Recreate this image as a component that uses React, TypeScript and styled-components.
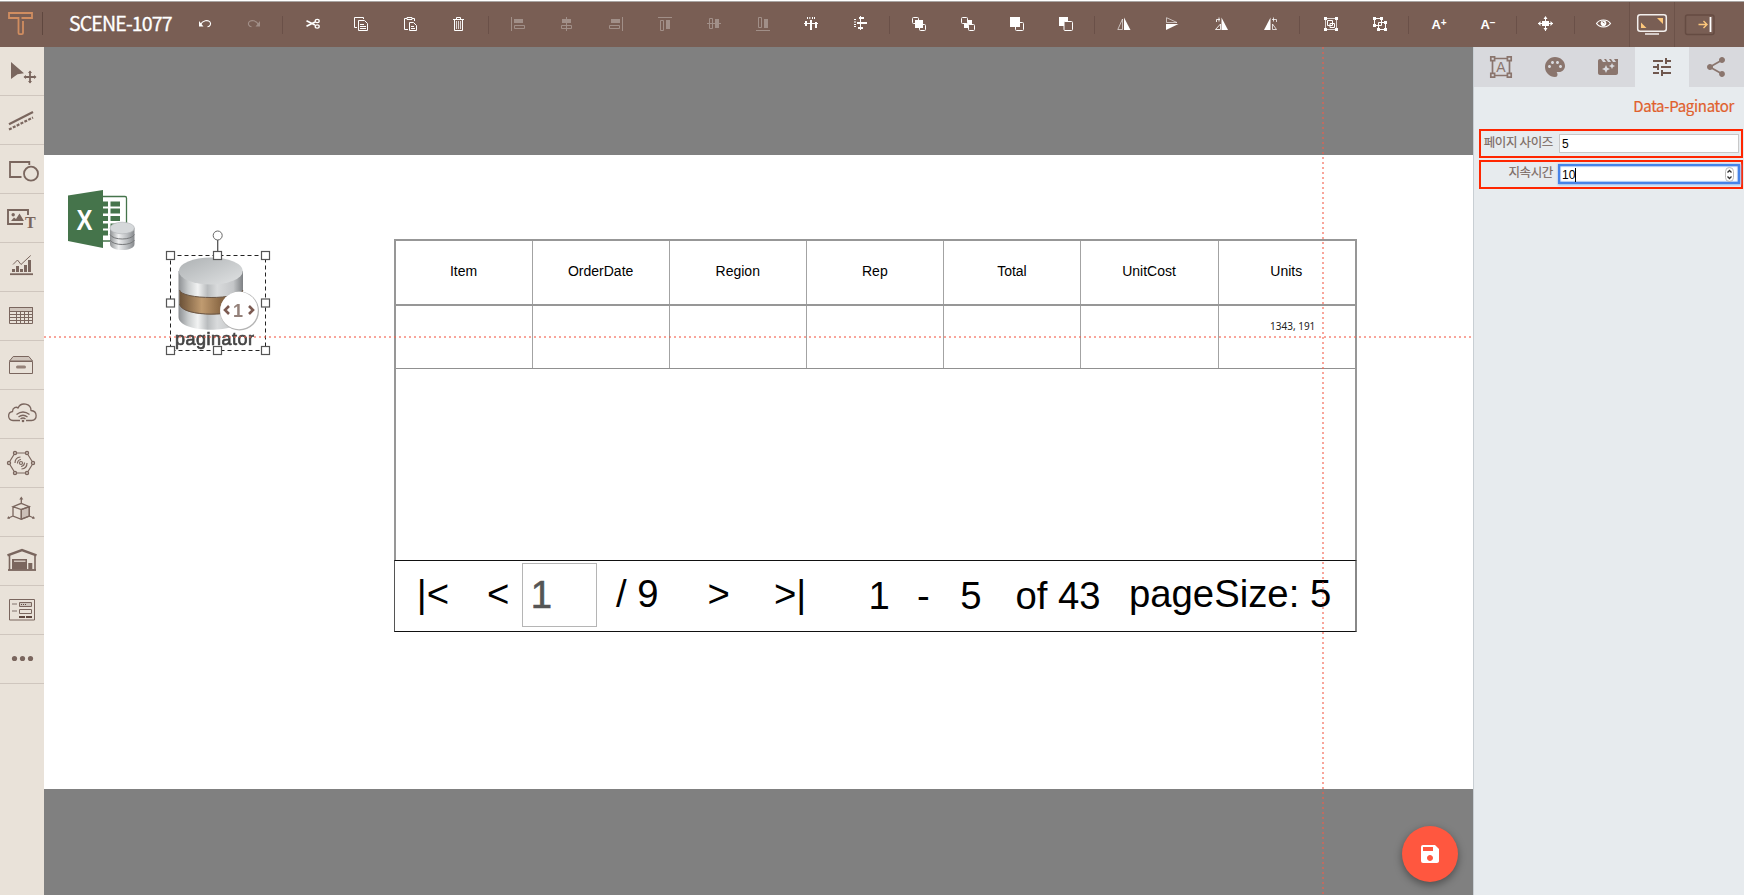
import React from "react";
import styled, { createGlobalStyle } from "styled-components";
import { MdPalette, MdMovieFilter, MdTune, MdShare, MdSave } from "react-icons/md";

const GlobalStyle = createGlobalStyle`
  * { box-sizing: border-box; }
  html, body { margin: 0; overflow: hidden; }
  body { font-family: "Liberation Sans", Arial, sans-serif; background: #fff; }
`;

const korean = `"Noto Sans CJK KR", "Noto Sans", sans-serif`;
const brown = "#7a665e";

const Page = styled.div`
  display: flex;
  flex-direction: column;
  width: 1744px;
  height: 895px;
  overflow: hidden;
`;

/* ---------- top toolbar ---------- */

const Toolbar = styled.header`
  flex: none;
  display: flex;
  align-items: center;
  height: 46px;
  margin-top: 1px;
  border-top: 1px solid #a9a5a3;
  background: #795e54;
`;
const Logo = styled.div`
  width: 42px;
  height: 45px;
  display: flex;
  align-items: center;
`;
const Divider = styled.i<{ $w?: number }>`
  flex: none;
  width: ${(p) => p.$w ?? 9}px;
  height: 18px;
  background: linear-gradient(#6a5048, #6a5048) 3.5px 0 / 1px 100% no-repeat;
`;
const LogoRule = styled.i`
  width: 1px;
  height: 23px;
  margin-top: -2px;
  background: #5f473f;
`;
const SceneTitle = styled.h1`
  margin: -3px 0 0;
  padding-left: 26px;
  width: 137.5px;
  font: 400 19.5px/44px ${korean};
  letter-spacing: -0.85px;
  white-space: nowrap;
  color: #fff;
  -webkit-text-stroke: 0.3px #fff;
`;
const ToolButton = styled.div<{ $dim?: boolean }>`
  flex: none;
  display: flex;
  justify-content: center;
  width: 49px;
  color: #fff;
  opacity: ${(p) => (p.$dim ? 0.3 : 1)};
  svg { display: block; margin-top: -1px; }
`;
const ScreenButton = styled.div<{ $w: number }>`
  flex: none;
  display: flex;
  align-items: center;
  justify-content: center;
  width: ${(p) => p.$w}px;
  height: 45px;
  border-left: 1px solid #6c5249;
  svg { display: block; }
`;

const Ico = ({ children }: { children: React.ReactNode }) => (
  <svg width="16" height="16" viewBox="0 0 16 16" fill="none" stroke="currentColor" strokeWidth="1">
    {children}
  </svg>
);

const fillOnly = { fill: "currentColor", stroke: "none" };

const icons: Record<string, React.ReactNode> = {
  undo: <><path d="M3.500 8.500C5.500 4.500 11 3.500 13 6c1.300 2 .2 4.500-2.500 4.800" strokeWidth="1.100" /><path d="M2 5v5.500h4.500z" {...fillOnly} /></>,
  redo: <><path d="M12.500 8.500C10.500 4.500 5 3.500 3 6c-1.300 2-.2 4.500 2.500 4.800" strokeWidth="1.100" /><path d="M14 5v5.500H9.500z" {...fillOnly} /></>,
  cut: <><path d="M1.500 4.700 10 9M1.500 10.300 10 6" strokeWidth="1.700" /><ellipse cx="12.200" cy="5" rx="2" ry="1.600" strokeWidth="1.300" /><ellipse cx="12.200" cy="10.500" rx="2" ry="1.600" strokeWidth="1.300" /></>,
  copy: <><path d="M3 11.500H.5v-10h9V3M4.500 4.500h6l3 3v7h-9zM6 8.500h4M6 10.500h6M6 12.500h6" /></>,
  paste: <><path d="M5 13.500H1.500v-11H4M9 2.500h2.500V5M4 1.500h5v2H4zM6.500 6.500h4l3 3v5h-7zM8 10.500h3M8 12.500h4" /></>,
  trash: <><path d="M1 3.500h11M4.500 3V1.500h4V3M2.500 4v10.500h8V4" /><path d="M4.500 5v8M6.500 5v8M8.500 5v8" opacity=".75" /></>,
  alignL: <><path d="M1.500 1v14M4.500 9.500h10v3h-10z" /><path d="M4 3h9v4H4z" {...fillOnly} /></>,
  alignC: <><path d="M7.500 1v14M2.500 9.500h10v3h-10z" /><path d="M3 3h9v4H3z" {...fillOnly} /></>,
  alignR: <><path d="M14.500 1v14M1.500 9.500h10v3h-10z" /><path d="M3 3h9v4H3z" {...fillOnly} /></>,
  alignT: <><path d="M1 1.500h14M3.500 4.500h3v10h-3z" /><path d="M9 4h4v9H9z" {...fillOnly} /></>,
  alignM: <><path d="M1 7.500h14M3.500 2.500h3v10h-3z" /><path d="M9 3h4v9H9z" {...fillOnly} /></>,
  alignB: <><path d="M1 14.500h14M3.500 1.500h3v10h-3z" /><path d="M9 3h4v9H9z" {...fillOnly} /></>,
  distH: <><path d="M0 7.500h14" /><path d="M3 1h1v2H3zM5.300 1h1v2h-1zM8 1h1v2H8zM10 1h1v2h-1zM1 5h2v5H1zM6 4h2v10H6zM11 6h2v6h-2z" {...fillOnly} /></>,
  distV: <><path d="M7.500 0v14" /><path d="M1 3h2v1H1zM1 5.500h2v1H1zM1 8h2v1H1zM1 10h2v1H1zM6 1h5v2H6zM4 6h10v2H4zM5 11h5v2H5z" {...fillOnly} /></>,
  front: <><rect x="1.500" y="1.500" width="6" height="6" rx="1" /><rect x="8.500" y="8.500" width="6" height="6" rx="1" /><path d="M4 4h8v8H4z" {...fillOnly} /></>,
  forward: <><path d="M4 4h8v8H4z" {...fillOnly} /><rect x="1.500" y="1.500" width="6" height="6" rx="1" fill="#795e54" /><rect x="8.500" y="8.500" width="6" height="6" rx="1" fill="#795e54" /></>,
  toTop: <><rect x="6.500" y="6.500" width="8" height="8" rx="1" /><path d="M1 1h10v10H1z" {...fillOnly} /></>,
  toBack: <><path d="M1 1h9v9H1z" {...fillOnly} /><rect x="6" y="5.500" width="8.500" height="9" rx="1" fill="#795e54" /></>,
  flipH: <><path d="M1.800 13.500 6.500 3v10.500z" opacity=".6" /><path d="M8 1.500 14.500 14H8z" {...fillOnly} /></>,
  flipV: <><path d="M1.500 1.700 12 6.500H1.500z" opacity=".6" /><path d="M1 8h12.500L1 14z" {...fillOnly} /></>,
  rotL: <><path d="M1.500 13.500 6.500 8v5.500zM2.500 6V3.500H6M5 1.500v4" opacity=".85" /><path d="M7.500 1.500 14 14H7.500z" {...fillOnly} /></>,
  rotR: <><path d="M13.500 13.500 9.500 8v5.500zM13.500 6V3.500H9M10.500 1.500v4" opacity=".75" /><path d="M7.500 1.500 1 14h6.500z" {...fillOnly} /></>,
  group: <><path d="M3 2.500h10M2.500 3v10M3 13.500h10M13.500 3v10" strokeDasharray="7 0" opacity=".75" /><path d="M4.500 4.500h5v5h-5zM7 7.500h4.500v4H7z" /><path d="M1 1h3v3H1zM12 1h3v3h-3zM1 12h3v3H1zM12 12h3v3h-3z" {...fillOnly} /></>,
  ungroup: <><path d="M2.500 2.500h7v7h-7zM6.500 6.500h7v7h-7z" /><path d="M1 1h3v3H1zM8 1h3v3H8zM1 8h3v3H1zM5 12h3v3H5zM12 5h3v3h-3zM12 12h3v3h-3z" {...fillOnly} /></>,
  center: <><path d="M7.500 1v14M0 7.500h15" /><path d="M4 5h7v5H4zM7.500 0 9.500 3h-4zM7.500 15l2-3h-4zM0 7.500 2.500 5v5zM15 7.500 12.500 5v5z" {...fillOnly} /></>,
};

const EyeIcon = () => (
  <Ico>
    <path d="M.5 7.500C3.500 2.800 11.500 2.800 14.500 7.500 11.500 12 3.500 12 .5 7.500z" strokeWidth="1.200" />
    <circle cx="7.500" cy="7.300" r="2.800" {...fillOnly} />
    <path d="M6.500 5.700l2 1.300" stroke="#795e54" />
  </Ico>
);
const FontSize = styled.span`
  display: flex;
  align-items: flex-start;
  font: 700 13px/16px "Liberation Sans", sans-serif;
  sup { font-size: 10px; line-height: 11px; }
`;

const Tool = ({ name, dim }: { name: string; dim?: boolean }) => (
  <ToolButton $dim={dim}><Ico>{icons[name]}</Ico></ToolButton>
);
const Tools = ({ names, dim }: { names: string[]; dim?: boolean }) => (
  <>{names.map((n) => <Tool key={n} name={n} dim={dim} />)}</>
);

const TopBar = () => (
  <Toolbar>
    <Logo>
      <svg width="42" height="45" viewBox="0 2 42 45" fill="none" stroke="#d08d60" strokeWidth="1.800">
        <path d="M23 21v12q0 1.200-1.200 1.200h-2.100q-1.200 0-1.200-1.200V18H9v-5h23v5H21.500" />
      </svg>
    </Logo>
    <LogoRule />
    <SceneTitle>SCENE-1077</SceneTitle>
    <Tool name="undo" />
    <Tool name="redo" dim />
    <Divider $w={10} />
    <Tools names={["cut", "copy", "paste", "trash"]} />
    <Divider />
    <Tools names={["alignL", "alignC", "alignR", "alignT", "alignM", "alignB"]} dim />
    <Tools names={["distH", "distV"]} />
    <Divider />
    <Tools names={["front", "forward", "toTop", "toBack"]} />
    <Divider />
    <Tools names={["flipH", "flipV", "rotL", "rotR"]} />
    <Divider $w={11} />
    <Tools names={["group", "ungroup"]} />
    <Divider $w={10} />
    <ToolButton><FontSize>A<sup>+</sup></FontSize></ToolButton>
    <ToolButton><FontSize>A<sup>−</sup></FontSize></ToolButton>
    <Divider />
    <Tool name="center" />
    <Divider $w={9} />
    <ToolButton><EyeIcon /></ToolButton>
    <ScreenButton $w={45}>
      <svg width="32" height="24" viewBox="0 0 32 24">
        <rect x="1.700" y="1.700" width="28.600" height="16.600" rx="2.500" fill="none" stroke="#f3efed" strokeWidth="1.500" />
        <path d="M9 21h14" stroke="#f3efed" strokeWidth="1.500" />
        <path d="M5 9.500v5.500h5.500zM27 11V5h-6z" fill="#fdc77b" />
      </svg>
    </ScreenButton>
    <ScreenButton $w={52}>
      <svg width="32" height="24" viewBox="0 0 32 24" fill="none">
        <rect x="1.500" y="2" width="28.500" height="19.500" rx="2" stroke="#654b42" strokeWidth="1.500" />
        <path d="M14.500 11.500h8.500M19.500 8l3.500 3.500-3.500 3.500" stroke="#fdc77b" strokeWidth="1.400" />
        <path d="M26.500 4v15" stroke="#fff" strokeWidth="1.800" />
      </svg>
    </ScreenButton>
  </Toolbar>
);

/* ---------- left rail ---------- */

const Body = styled.div`
  flex: 1;
  display: flex;
  min-height: 0;
`;
const Rail = styled.nav`
  flex: none;
  width: 44px;
  background: #e9e2d9;
`;
const RailItem = styled.div`
  height: 49px;
  border-bottom: 1px solid #cfc6be;
  svg { display: block; }
`;

const f = { fill: brown, stroke: "none" };
const railIcons: React.ReactNode[] = [
  <><path d="M11 15l13 11.300-6.500 1L11 32z" {...f} /><path d="M30 24.500v11M24.500 30h11" strokeWidth="1.800" /><path d="M30 23.500l2 2.500h-4zM30 36.500l2-2.500h-4zM23.500 30l2.500-2v4zM36.500 30L34 28v4z" {...f} /></>,
  <><path d="M9 28.300L33 16" strokeWidth="2.200" /><path d="M9 33.500L33 21.500" strokeWidth="2.200" strokeDasharray="3 1.300" /></>,
  <><path d="M29.300 20v-3H10v15h11.500" strokeWidth="1.800" /><circle cx="31" cy="28.700" r="7" strokeWidth="1.800" /></>,
  <><path d="M28 21v-5H8v14h15" strokeWidth="1.900" /><circle cx="13.200" cy="20.700" r="1.700" {...f} /><path d="M11 27l3-3.500 2 1.500 3.500-5.500L24 27z" {...f} /><text x="25" y="34" fontFamily="Liberation Serif, serif" fontWeight="700" fontSize="16" {...f}>T</text></>,
  <><path d="M10 31.200h23" strokeWidth="1.800" /><path d="M12 26h3v3h-3zM16 23h3v6h-3zM20 26h3v3h-3zM24 22h3v7h-3zM28 17h3v12h-3z" {...f} /><path d="M13 21.500l4.500-4.500 3.500 4.500 9.700-9" /></>,
  <><path d="M9.500 15.500h23v4h-23z" fill="#d0c5bc" /><path d="M9.500 15.500h23v16h-23zM16.500 19.500v12M20.500 19.500v12M24.500 19.500v12M28.500 19.500v12M9.500 22.500h23M9.500 25.500h23M9.500 28.500h23" /></>,
  <><path d="M9.500 20l3.700-4.500h15.600l3.700 4.500z" fill="#d0c5bc" /><path d="M9.500 20.500h23v12h-23z" /><rect x="16" y="24.500" width="10" height="3" rx="1.500" {...f} fill="#958279" /></>,
  <g strokeWidth="1.300"><path d="M20 30.500h-7c-5.500-.3-6-8-.5-9 0-4 4-5 5.500-3.500 3-6.500 13-4.500 13 2.500 6.500.5 7 9.500.5 10H26" /><path d="M16.500 24.500q6.500-5 13 0M18.500 27q4.500-3.500 9 0M20.500 29q2.500-2 5 0" /><circle cx="23" cy="31" r="1.300" {...f} /></g>,
  <g strokeWidth="1.200"><path d="M17 14h8M28 15.700l4 6.500M32 26l-4 6.500M25 34h-8M14 32.300l-4-6.500M10 22l4-6.500" />{[[15, 14], [27, 14], [33, 24], [27, 34], [15, 34], [9, 24]].map(([x, y]) => <circle key={`${x}${y}`} cx={x} cy={y} r="1.600" fill="#c9bdb4" />)}<circle cx="21" cy="24" r="1.500" /><path d="M17.500 24.500q0-3.500 3.500-4M15 24q0-5.500 5.500-6M24.500 23.500q0 3.500-3.500 4M27 24q0 5.500-5.500 6" /></g>,
  <g strokeWidth="1.300"><path d="M21.300 21.500v9.500l8-3V18.700z" fill="#cbbfb7" /><path d="M21.300 15.300l8 3.400-8 2.800-8.300-2.800zM13 18.700V28l8.300 3.300 8-3.300v-9.300M21.300 21.500v9.500M21.300 15V10M13 28l-4.500 2M29.300 28l4.500 2" /><path d="M19.300 11.500l2-3 2 3zM7 30.500l1.500-2.500 1.500 3zM35 30.500L33.500 28 32 31z" {...f} /></g>,
  <><path d="M7.500 18.300L22 13l14.500 5.300" strokeWidth="2.500" /><path d="M9.500 18v15M35 18v15" strokeWidth="1.600" /><path d="M8 33h28" strokeWidth="1.800" /><path d="M12 22h15v10.500H12zM28.300 26h4v6.500h-4z" {...f} /><path d="M14 23.500h11.500V25H14z" fill="#d0c5bc" stroke="none" /></>,
  <><path d="M9.500 13.500h25v20.500h-25z" /><path d="M12 17h5v2h-5zM12 24h5v2h-5z" {...f} fill="#b5aaa3" /><path d="M19.500 16.500h12v4h-12z" fill="#cfc6be" /><path d="M19.500 23.500h12v4h-12z" /><path d="M21 18h1v1h-1zM23 18h1v1h-1zM25 18h1v1h-1zM19 30h6v2h-6zM26 30h6v2h-6z" {...f} fill="#5f4840" /></>,
  <>{[14.5, 22.5, 30.5].map((x) => <circle key={x} cx={x} cy="23.500" r="2.600" {...f} />)}</>,
];

const LeftRail = () => (
  <Rail>
    {railIcons.map((icon, i) => (
      <RailItem key={i}>
        <svg width="44" height="48" viewBox="0 0 44 48" fill="none" stroke={brown}>{icon}</svg>
      </RailItem>
    ))}
  </Rail>
);

/* ---------- canvas ---------- */

const Stage = styled.main`
  position: relative;
  flex: none;
  width: 1429px;
  padding: 108px 0 106px;
  background: #808080;
`;
const Scene = styled.div`
  position: relative;
  height: 634px;
  background: #fff;
`;
const Placed = styled.div<{ $x: number; $y: number }>`
  position: absolute;
  left: ${(p) => p.$x}px;
  top: ${(p) => p.$y}px;
  svg { display: block; }
`;
const DataTable = styled.div`
  width: 963px;
  height: 322px;
  border: 2px solid #979797;
  border-bottom: none;
`;
const TableRow = styled.div<{ $head?: boolean }>`
  display: grid;
  grid-template-columns: repeat(6, 137.1px) 1fr;
  height: ${(p) => (p.$head ? 65 : 63)}px;
  border-bottom: ${(p) => (p.$head ? "2px solid #979797" : "1px solid #909090")};
`;
const Cell = styled.div`
  display: flex;
  align-items: center;
  justify-content: center;
  padding: 0 1px 3px 0;
  font-size: 14px;
  color: #000;
  border-right: 1px solid #a3a3a3;
  &:last-child { border-right: none; }
`;
const Pager = styled.div`
  display: flex;
  align-items: flex-start;
  width: 963px;
  height: 72px;
  border: 1px solid #111;
  border-left-color: #555;
  border-right: 2px solid #888;
  font-size: 38.3px;
  line-height: 44px;
  color: #000;
`;
const PagerText = styled.span<{ $gap: number; $low?: boolean }>`
  flex: none;
  white-space: pre;
  margin-left: ${(p) => p.$gap}px;
  margin-top: ${(p) => (p.$low ? 13 : 11)}px;
`;
const PageInput = styled.div`
  flex: none;
  width: 75px;
  height: 64px;
  margin: 2px 0 0 12.5px;
  padding: 9px 0 0 8px;
  border: 1px solid #b5b5b5;
  color: #555;
  -webkit-text-stroke: 0.6px #555;
`;
const CursorLabel = styled.span`
  display: block;
  font: 400 10px/14px "Noto Sans", sans-serif;
  color: #222;
`;
const GuideX = styled.i`
  position: absolute;
  left: 0;
  right: 2px;
  top: 289px;
  height: 2px;
  background: repeating-linear-gradient(90deg, rgba(244, 91, 71, 0.55) 0 2px, transparent 2px 5px);
`;
const GuideY = styled.i`
  position: absolute;
  top: 0;
  bottom: 0;
  left: 1278px;
  width: 2px;
  background: repeating-linear-gradient(180deg, rgba(244, 91, 71, 0.55) 0 2px, transparent 2px 5px);
`;
const SaveButton = styled.div`
  position: absolute;
  left: 1358px;
  top: 779px;
  display: flex;
  align-items: center;
  justify-content: center;
  width: 56px;
  height: 56px;
  border-radius: 50%;
  background: #ff573f;
  color: #fff;
  box-shadow: 0 3px 8px rgba(0, 0, 0, 0.4);
`;

const ExcelSource = () => (
  <svg width="70" height="64" viewBox="66 188 70 64">
    <defs>
      <linearGradient id="silver" x1="0" x2="1">
        <stop offset="0" stopColor="#8f9294" /><stop offset=".35" stopColor="#eff0f1" /><stop offset=".7" stopColor="#babdc0" /><stop offset="1" stopColor="#85888b" />
      </linearGradient>
    </defs>
    <rect x="98" y="196.500" width="28.500" height="44.500" rx="1.500" fill="#fff" stroke="#45744b" strokeWidth="1.300" />
    {[201.5, 208.5, 216, 223.5, 230.5].map((y) => (
      <g key={y} fill="#45744b"><rect x="102" y={y} width="6" height="5" /><rect x="110.500" y={y} width="9.500" height="5" /></g>
    ))}
    <path d="M68 195.500l35-5.500v58l-35-7z" fill="#45744b" />
    <text x="76.500" y="229.700" fontSize="30" fontWeight="700" fontFamily="Liberation Sans, sans-serif" fill="#fff" textLength="16" lengthAdjust="spacingAndGlyphs">X</text>
    <path d="M110 228v16c0 8 24.500 8 24.500 0v-16z" fill="url(#silver)" />
    <ellipse cx="122.200" cy="228" rx="12.200" ry="5.800" fill="#d5d8da" stroke="#b5b8ba" strokeWidth=".7" />
    <path d="M110 234.500c3 6 21.500 6 24.500 0M110 240c3 6 21.500 6 24.500 0" fill="none" stroke="#77797b" strokeWidth="1" />
  </svg>
);

const handles = [[170.5, 255.5], [217.5, 255.5], [265.5, 255.5], [170.5, 303], [265.5, 303], [170.5, 350.5], [217.5, 350.5], [265.5, 350.5]];

const Paginator = () => (
  <svg width="110" height="130" viewBox="162 228 110 130">
    <defs>
      <linearGradient id="steel" x1="0" x2="1">
        <stop offset="0" stopColor="#8d9093" /><stop offset=".15" stopColor="#c9cccd" /><stop offset=".3" stopColor="#f2f3f3" /><stop offset=".45" stopColor="#b9bcbe" /><stop offset=".6" stopColor="#d9dbdc" /><stop offset=".85" stopColor="#c4c6c8" /><stop offset="1" stopColor="#7d8083" />
      </linearGradient>
      <linearGradient id="bronze" x1="0" x2="1">
        <stop offset="0" stopColor="#6b5137" /><stop offset=".35" stopColor="#c09b70" /><stop offset=".65" stopColor="#8a6845" /><stop offset="1" stopColor="#745538" />
      </linearGradient>
      <linearGradient id="lid" x1="0" y1="0" x2="1" y2="1">
        <stop offset="0" stopColor="#adb1b3" /><stop offset="1" stopColor="#e0e2e3" />
      </linearGradient>
      <filter id="soft"><feGaussianBlur stdDeviation=".7" /></filter>
    </defs>
    <g filter="url(#soft)">
      <path d="M178.500 271v46c0 17 64.500 17 64.500 0v-46z" fill="url(#steel)" />
      <path d="M179.500 290c2 10 61 10 63.500 0v14c-2.500 14-61.500 14-63.500 0z" fill="url(#bronze)" />
      <path d="M179.500 290c2 10 61 10 63.500 0M179.500 304c2 13.500 61 13.500 63.500 0" fill="none" stroke="#695544" strokeWidth="1" />
      <ellipse cx="210.800" cy="271" rx="32" ry="13.500" fill="url(#lid)" />
      <circle cx="239.500" cy="311" r="19.500" fill="#b4b4b4" />
      <circle cx="239" cy="310.500" r="18.800" fill="#fff" />
      <path d="M229 306l-4 4 4 4M249 306l4 4-4 4" fill="none" stroke="#7b5a51" strokeWidth="2.600" />
      <text x="233" y="316.500" fontSize="18" fontWeight="700" fontFamily="Liberation Sans, sans-serif" fill="#94817a">1</text>
      <text x="175" y="345" fontSize="18" fontFamily="Liberation Sans, sans-serif" fill="#444" stroke="#444" strokeWidth=".7" textLength="79">paginator</text>
    </g>
    <rect x="170.500" y="255.500" width="95" height="95" fill="none" stroke="#222" strokeDasharray="4 3" />
    <path d="M217.700 240v11" stroke="#555" strokeWidth="1.300" />
    <circle cx="217.700" cy="235.500" r="4.500" fill="#fff" stroke="#666" />
    {handles.map(([x, y]) => (
      <rect key={`${x}-${y}`} x={x - 4} y={y - 4} width="8" height="8" fill="#fff" stroke="#555" strokeWidth="1.200" />
    ))}
  </svg>
);

const columns = ["Item", "OrderDate", "Region", "Rep", "Total", "UnitCost", "Units"];

const Canvas = () => (
  <Stage>
    <Scene>
      <Placed $x={22} $y={33}><ExcelSource /></Placed>
      <Placed $x={118} $y={73}><Paginator /></Placed>
      <Placed $x={350} $y={84}>
        <DataTable>
          <TableRow $head>{columns.map((c) => <Cell key={c}>{c}</Cell>)}</TableRow>
          <TableRow>{columns.map((c) => <Cell key={c} />)}</TableRow>
        </DataTable>
      </Placed>
      <Placed $x={350} $y={405}>
        <Pager>
          <PagerText $gap={21.8}>{"|<"}</PagerText>
          <PagerText $gap={37.8}>{"<"}</PagerText>
          <PageInput>1</PageInput>
          <PagerText $gap={19.3}>/ 9</PagerText>
          <PagerText $gap={48.9}>{">"}</PagerText>
          <PagerText $gap={44}>{">|"}</PagerText>
          <PagerText $gap={62.3} $low>1</PagerText>
          <PagerText $gap={27} $low>-</PagerText>
          <PagerText $gap={30.5} $low>5</PagerText>
          <PagerText $gap={34} $low>of 43</PagerText>
          <PagerText $gap={28.3}>pageSize: 5</PagerText>
        </Pager>
      </Placed>
      <Placed $x={1226} $y={164}><CursorLabel>1343, 191</CursorLabel></Placed>
    </Scene>
    <GuideX />
    <GuideY />
    <SaveButton><MdSave size={24} /></SaveButton>
  </Stage>
);

/* ---------- property panel ---------- */

const Panel = styled.aside`
  flex: 1;
  display: flex;
  flex-direction: column;
  border-left: 1px solid #c8ced3;
  background: #e7ebee;
`;
const Tabs = styled.div`
  display: flex;
  height: 40px;
  padding-right: 1px;
  background: #d8d9dd;
`;
const Tab = styled.div<{ $active?: boolean }>`
  flex: 1;
  display: flex;
  align-items: center;
  justify-content: center;
  background: ${(p) => (p.$active ? "#e7ebee" : "#d8d9dd")};
  color: ${(p) => (p.$active ? "#6f574e" : "#8a756d")};
`;
const PanelTitle = styled.h2`
  margin: 7px 10px 0 0;
  height: 35px;
  font: 400 15px/24px ${korean};
  letter-spacing: -0.3px;
  text-align: right;
  color: #e0602c;
  -webkit-text-stroke: 0.2px #e0602c;
`;
const Field = styled.div`
  display: flex;
  align-items: center;
  width: 264px;
  height: 29px;
  margin: 0 0 2px 5px;
  border: 2px solid #ff2600;
`;
const FieldLabel = styled.label<{ $up?: boolean }>`
  width: 72px;
  margin-top: ${(p) => (p.$up ? -6 : -4)}px;
  font: 400 12.5px/20px ${korean};
  letter-spacing: -0.35px;
  white-space: nowrap;
  text-align: right;
  color: #7a6962;
  -webkit-text-stroke: 0.15px #7a6962;
`;
const FieldInput = styled.div<{ $focus?: boolean }>`
  display: flex;
  align-items: center;
  width: 180px;
  height: ${(p) => (p.$focus ? 18 : 19)}px;
  margin: ${(p) => (p.$focus ? "-1px" : "0")} 0 0 6px;
  padding: 1px 4px 0 2px;
  border: 1px solid ${(p) => (p.$focus ? "#4683e8" : "#c8c8c8")};
  background: #fff;
  font-size: 12px;
  color: #000;
  box-shadow: ${(p) => (p.$focus ? "0 0 0 1px #4683e8, inset 0 0 1px 0.5px #6a9cec, 0 0 2px 1.5px #8fb3f0" : "none")};
`;
const Caret = styled.i`
  width: 1px;
  height: 14px;
  background: #000;
`;
const Spinner = styled.span`
  display: flex;
  margin-left: auto;
  svg { display: block; }
`;

const PropertyPanel = () => (
  <Panel>
    <Tabs>
      <Tab>
        <svg width="24" height="24" viewBox="0 0 24 24" fill="none" stroke="currentColor" strokeWidth="1.700">
          <path d="M5 3.500h14M5 20.500h14M3.500 5v14M20.500 5v14" />
          <path d="M1.800 1.800h3.800v3.800H1.800zM18.400 1.800h3.800v3.800h-3.800zM1.800 18.400h3.800v3.800H1.800zM18.400 18.400h3.800v3.800h-3.800z" fill="#d8d9dd" />
          <text x="7.300" y="17" fontSize="14" fontFamily="Liberation Sans, sans-serif" fill="currentColor" stroke="none">A</text>
        </svg>
      </Tab>
      <Tab><MdPalette size={24} /></Tab>
      <Tab><MdMovieFilter size={24} /></Tab>
      <Tab $active><MdTune size={24} /></Tab>
      <Tab><MdShare size={24} /></Tab>
    </Tabs>
    <PanelTitle>Data-Paginator</PanelTitle>
    <Field>
      <FieldLabel>페이지 사이즈</FieldLabel>
      <FieldInput>5</FieldInput>
    </Field>
    <Field>
      <FieldLabel $up>지속시간</FieldLabel>
      <FieldInput $focus>
        10<Caret />
        <Spinner>
          <svg width="9" height="15" viewBox="0 0 9 15" fill="none">
            <rect x=".500" y=".500" width="8" height="14" rx="4" stroke="#bbb" />
            <path d="M2.500 5.500l2-2 2 2M2.500 9.500l2 2 2-2" stroke="#333" strokeWidth="1.300" />
          </svg>
        </Spinner>
      </FieldInput>
    </Field>
  </Panel>
);

export default function App() {
  return (
    <>
      <GlobalStyle />
      <Page>
        <TopBar />
        <Body>
          <LeftRail />
          <Canvas />
          <PropertyPanel />
        </Body>
      </Page>
    </>
  );
}
